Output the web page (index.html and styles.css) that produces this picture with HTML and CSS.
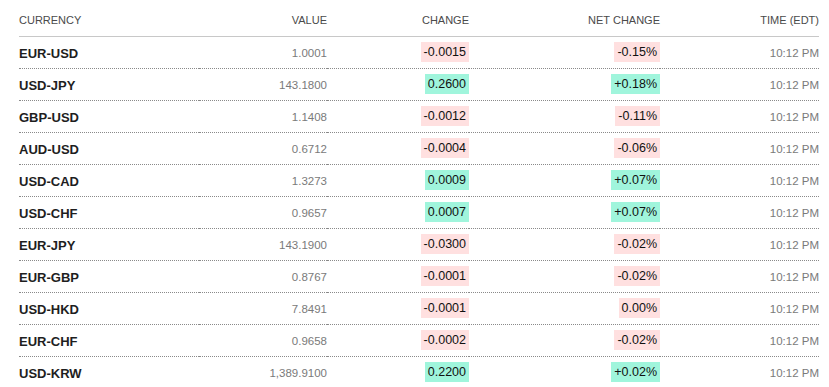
FILE: index.html
```html
<!DOCTYPE html>
<html lang="en">
<head>
  <meta charset="UTF-8" />
  <title>Currencies</title>
  <link rel="stylesheet" href="styles.css">
</head>
<body>
  <table class="quotes">
    <colgroup>
      <col class="col-symbol">
      <col class="col-value">
      <col class="col-change">
      <col class="col-net">
      <col class="col-time">
    </colgroup>
    <thead>
      <tr>
        <th class="left">Currency</th>
        <th>Value</th>
        <th>Change</th>
        <th>Net Change</th>
        <th>Time (EDT)</th>
      </tr>
    </thead>
    <tbody>
      <tr><td class="symbol">EUR-USD</td><td class="num">1.0001</td><td><span class="badge down">-0.0015</span></td><td><span class="badge down">-0.15%</span></td><td class="num">10:12 PM</td></tr>
      <tr><td class="symbol">USD-JPY</td><td class="num">143.1800</td><td><span class="badge up">0.2600</span></td><td><span class="badge up">+0.18%</span></td><td class="num">10:12 PM</td></tr>
      <tr><td class="symbol">GBP-USD</td><td class="num">1.1408</td><td><span class="badge down">-0.0012</span></td><td><span class="badge down">-0.11%</span></td><td class="num">10:12 PM</td></tr>
      <tr><td class="symbol">AUD-USD</td><td class="num">0.6712</td><td><span class="badge down">-0.0004</span></td><td><span class="badge down">-0.06%</span></td><td class="num">10:12 PM</td></tr>
      <tr><td class="symbol">USD-CAD</td><td class="num">1.3273</td><td><span class="badge up">0.0009</span></td><td><span class="badge up">+0.07%</span></td><td class="num">10:12 PM</td></tr>
      <tr><td class="symbol">USD-CHF</td><td class="num">0.9657</td><td><span class="badge up">0.0007</span></td><td><span class="badge up">+0.07%</span></td><td class="num">10:12 PM</td></tr>
      <tr><td class="symbol">EUR-JPY</td><td class="num">143.1900</td><td><span class="badge down">-0.0300</span></td><td><span class="badge down">-0.02%</span></td><td class="num">10:12 PM</td></tr>
      <tr><td class="symbol">EUR-GBP</td><td class="num">0.8767</td><td><span class="badge down">-0.0001</span></td><td><span class="badge down">-0.02%</span></td><td class="num">10:12 PM</td></tr>
      <tr><td class="symbol">USD-HKD</td><td class="num">7.8491</td><td><span class="badge down">-0.0001</span></td><td><span class="badge down">0.00%</span></td><td class="num">10:12 PM</td></tr>
      <tr><td class="symbol">EUR-CHF</td><td class="num">0.9658</td><td><span class="badge down">-0.0002</span></td><td><span class="badge down">-0.02%</span></td><td class="num">10:12 PM</td></tr>
      <tr><td class="symbol">USD-KRW</td><td class="num">1,389.9100</td><td><span class="badge up">0.2200</span></td><td><span class="badge up">+0.02%</span></td><td class="num">10:12 PM</td></tr>
    </tbody>
  </table>
</body>
</html>
```

FILE: styles.css
```css
* {
  margin: 0;
  padding: 0;
  box-sizing: border-box;
}

body {
  font-family: 'Liberation Sans', Arial, sans-serif;
  background: #fff;
  color: #222;
  padding: 0 10px 0 19px;
}

.quotes {
  width: 800px;
  border-collapse: collapse;
  table-layout: fixed;
}

.col-symbol { width: 180px; }
.col-value { width: 128px; }
.col-change { width: 142px; }
.col-net { width: 191px; }
.col-time { width: 159px; }

.quotes th {
  height: 36px;
  padding: 14px 0 8px;
  font-size: 11px;
  line-height: 13px;
  font-weight: normal;
  text-transform: uppercase;
  color: #4a4a4a;
  text-align: right;
  vertical-align: top;
  border-bottom: 1px solid #c8c8c8;
}

.quotes th.left {
  text-align: left;
}

.quotes td {
  height: 32px;
  padding: 0;
  text-align: right;
  vertical-align: middle;
  border-bottom: 1px dotted #8a8a8a;
  white-space: nowrap;
}

.quotes td.symbol {
  text-align: left;
  font-size: 13px;
  font-weight: bold;
  color: #1e1e1e;
  padding-top: 3px;
}

.quotes td.num {
  font-size: 11.5px;
  color: #7a7a7a;
  padding-top: 1px;
}

.badge {
  display: inline-block;
  padding: 0 3px;
  font-size: 12.5px;
  line-height: 20px;
  color: #111;
}

.badge.down {
  background: #ffe0e0;
}

.badge.up {
  background: #a0f5dc;
}
```
